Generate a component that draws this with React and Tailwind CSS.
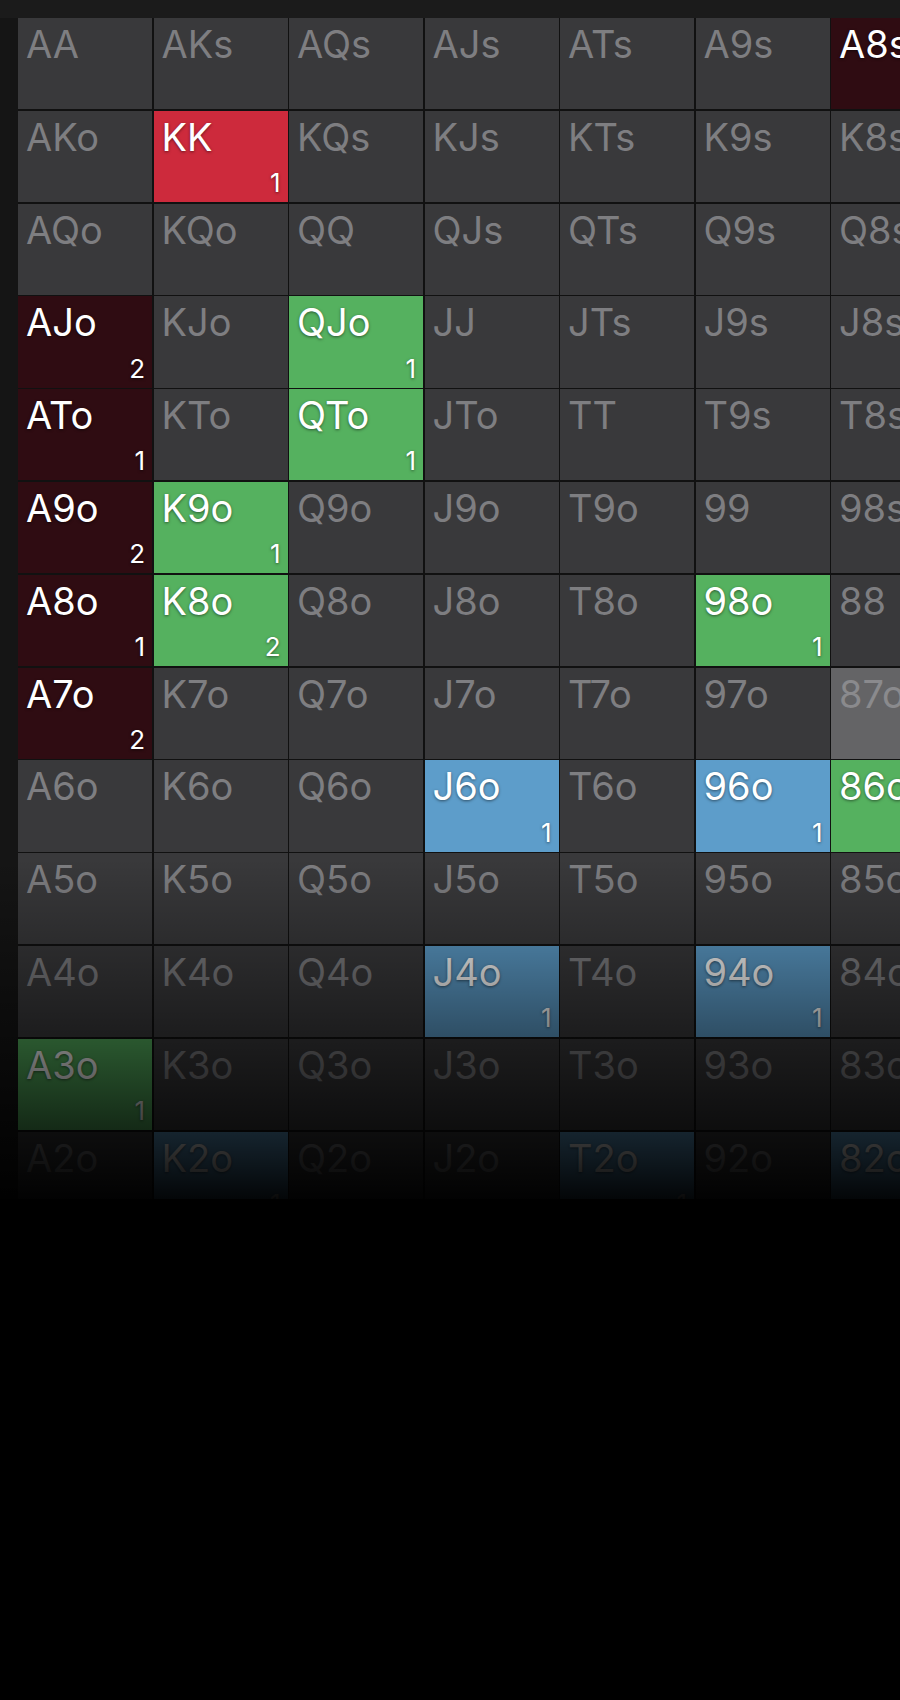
const RANKS = ["A", "K", "Q", "J", "T", "9", "8", "7", "6", "5", "4", "3", "2"];

const STYLES = {
  empty: "bg-[#39393b] text-[#7e7e81]",
  maroon: "bg-[#2f0c12] text-white [text-shadow:0_1px_3px_rgba(0,0,0,0.6)]",
  red: "bg-[#cd2a3c] text-white [text-shadow:0_1px_3px_rgba(0,0,0,0.5)]",
  green: "bg-[#55b15f] text-white [text-shadow:0_1px_3px_rgba(0,0,0,0.5)]",
  blue: "bg-[#5d9dca] text-white [text-shadow:0_1px_3px_rgba(0,0,0,0.5)]",
  gray: "bg-[#646466] text-[#8a8a8d]",
};

// hand -> [style, count]
const MARKED = {
  A8s: ["maroon", 1],
  KK: ["red", 1],
  AJo: ["maroon", 2],
  QJo: ["green", 1],
  ATo: ["maroon", 1],
  QTo: ["green", 1],
  A9o: ["maroon", 2],
  K9o: ["green", 1],
  A8o: ["maroon", 1],
  K8o: ["green", 2],
  "98o": ["green", 1],
  A7o: ["maroon", 2],
  "87o": ["gray", null],
  J6o: ["blue", 1],
  "96o": ["blue", 1],
  "86o": ["green", 1],
  J4o: ["blue", 1],
  "94o": ["blue", 1],
  A3o: ["green", 1],
  K2o: ["blue", 1],
  T2o: ["blue", 1],
  "82o": ["blue", 1],
};

function handName(r, c) {
  if (r === c) return RANKS[r] + RANKS[c];
  if (c > r) return RANKS[r] + RANKS[c] + "s";
  return RANKS[c] + RANKS[r] + "o";
}

function Cell({ hand }) {
  const [kind, count] = MARKED[hand] || ["empty", null];
  return (
    <div className={`flex h-[91.3px] w-[134px] flex-col justify-between pl-2 pr-[7px] pt-[7px] pb-[6px] ${STYLES[kind]}`}>
      <span className="text-[38px] leading-none">{hand}</span>
      {count != null && <span className="self-end text-[26px] leading-none">{count}</span>}
    </div>
  );
}

export default function App() {
  const cells = [];
  RANKS.forEach((_, r) => RANKS.forEach((_, c) => cells.push(handName(r, c))));

  return (
    <div className="min-h-[1700px] w-[900px] bg-black font-['Inter','Liberation_Sans',sans-serif]">
      <div className="relative h-[1199px] overflow-hidden bg-[#151515]">
        <div className="h-[18px] bg-[#1b1b1b]" />
        <div className="pl-[18px]">
          <div className="grid w-max grid-cols-[repeat(13,134px)] gap-[1.5px] bg-[#111111]">
            {cells.map((h) => (
              <Cell key={h} hand={h} />
            ))}
          </div>
        </div>
        <div className="pointer-events-none absolute inset-x-0 bottom-0 h-[340px] bg-gradient-to-b from-transparent via-[rgba(0,0,0,0.48)] to-[rgba(0,0,0,0.96)]" />
      </div>
    </div>
  );
}
